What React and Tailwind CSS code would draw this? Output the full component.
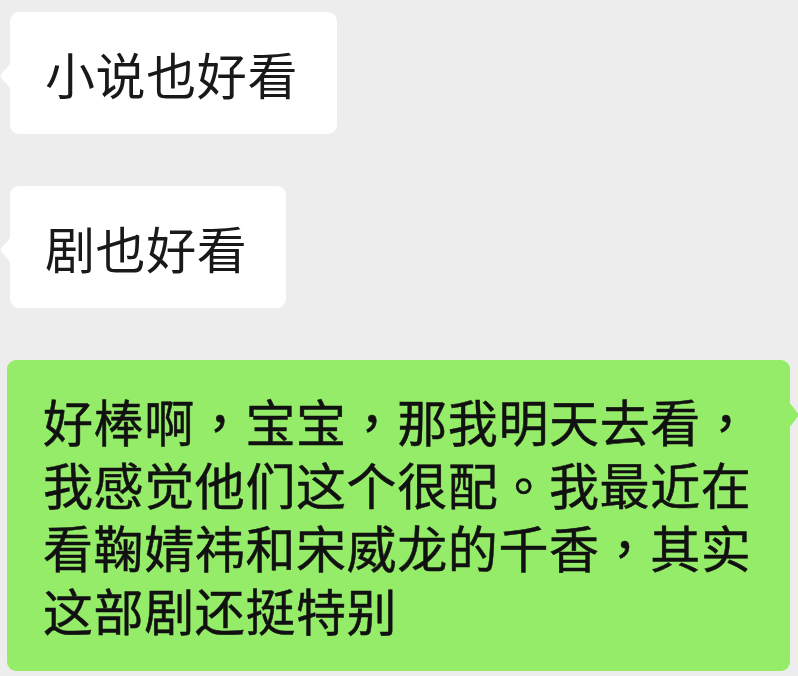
import React from "react";

const font = {
  fontFamily: '"Noto Sans CJK SC", "Noto Sans", sans-serif',
};

// Full-width punctuation sits centred in its cell, as in the TC face.
function P({ children }) {
  return (
    <span style={{ fontFamily: '"Noto Sans CJK TC", "Noto Sans CJK SC", sans-serif' }}>
      {children}
    </span>
  );
}

function LeftTail() {
  return (
    <svg
      className="absolute left-[-10px] top-[51px]"
      width="11"
      height="26"
      viewBox="0 0 11 26"
    >
      <path d="M11 0 L1.2 11.2 Q0 13 1.2 14.8 L11 26 Z" fill="#ffffff" />
    </svg>
  );
}

function RightTail() {
  return (
    <svg
      className="absolute right-[-9px] top-[42px]"
      width="10"
      height="26"
      viewBox="0 0 10 26"
    >
      <path d="M0 0 L8.8 11.2 Q10 13 8.8 14.8 L0 26 Z" fill="#95ec69" />
    </svg>
  );
}

function IncomingBubble({ children }) {
  return (
    <div className="relative ml-[10px] self-start rounded-[9px] bg-white pl-[35px] pr-[39px] py-[29.5px] text-[50px] leading-[63px] tracking-[0.6px] text-[#191919]">
      <LeftTail />
      {children}
    </div>
  );
}

function OutgoingBubble({ children }) {
  return (
    <div className="relative ml-[7px] w-[783px] rounded-[9px] bg-[#95ec69] pl-[36px] pr-[34px] pt-[29px] pb-[30px] text-[50px] leading-[63px] tracking-[0.6px] text-[#111111] [-webkit-text-stroke:0.5px_#111111]">
      <RightTail />
      {children}
    </div>
  );
}

export default function App() {
  return (
    <div
      className="flex h-[676px] w-[798px] flex-col gap-[52px] overflow-hidden bg-[#ededed] pt-[12px]"
      style={font}
    >
      <IncomingBubble>小说也好看</IncomingBubble>
      <IncomingBubble>剧也好看</IncomingBubble>
      <OutgoingBubble>
        好棒啊<P>，</P>宝宝<P>，</P>那我明天去看<P>，</P>我感觉他们这个很配<P>。</P>我最近在看鞠婧祎和宋威龙的千香<P>，</P>其实这部剧还挺特别
      </OutgoingBubble>
    </div>
  );
}
